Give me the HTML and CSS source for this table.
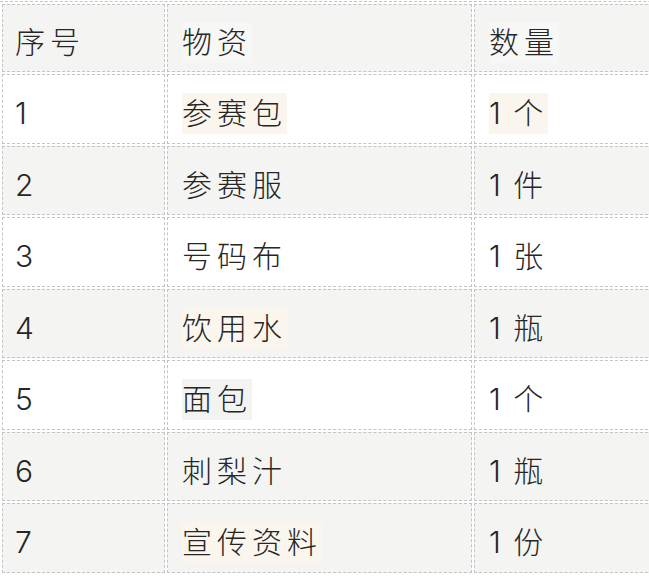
FILE: index.html
```html
<!DOCTYPE html>
<html lang="zh-CN">
<head>
<meta charset="utf-8">
<title>物资清单</title>
<link rel="stylesheet" href="styles.css">
</head>
<body>
<table class="supply">
  <thead>
    <tr class="head">
      <th class="c1"><span class="t">序号</span></th>
      <th class="c2"><span class="t hl-grey">物资</span></th>
      <th class="c3"><span class="t hl-grey">数量</span></th>
    </tr>
  </thead>
  <tbody>
    <tr class="odd">
      <td><span class="t">1</span></td>
      <td><span class="t hl-cream">参赛包</span></td>
      <td><span class="t hl-cream">1 个</span></td>
    </tr>
    <tr class="even">
      <td><span class="t">2</span></td>
      <td><span class="t">参赛服</span></td>
      <td><span class="t">1 件</span></td>
    </tr>
    <tr class="odd">
      <td><span class="t">3</span></td>
      <td><span class="t">号码布</span></td>
      <td><span class="t">1 张</span></td>
    </tr>
    <tr class="even">
      <td><span class="t">4</span></td>
      <td><span class="t hl-cream">饮用水</span></td>
      <td><span class="t">1 瓶</span></td>
    </tr>
    <tr class="odd">
      <td><span class="t">5</span></td>
      <td><span class="t hl-grey">面包</span></td>
      <td><span class="t">1 个</span></td>
    </tr>
    <tr class="even">
      <td><span class="t">6</span></td>
      <td><span class="t">刺梨汁</span></td>
      <td><span class="t">1 瓶</span></td>
    </tr>
    <tr class="even">
      <td><span class="t">7</span></td>
      <td><span class="t hl-cream">宣传资料</span></td>
      <td><span class="t">1 份</span></td>
    </tr>
  </tbody>
</table>
</body>
</html>
```
FILE: styles.css
```css
html, body {
  margin: 0;
  padding: 0;
  background: #ffffff;
  overflow: hidden;
}

body {
  font-family: "Inter", "Noto Sans CJK SC", "Noto Sans", sans-serif;
  color: #262626;
}

.supply {
  border-collapse: separate;
  border-spacing: 2px;
  table-layout: fixed;
  width: 776px;
  margin-top: 1px;
  border-top: 1px dashed #c4c4c4;
}

.supply th,
.supply td {
  box-sizing: border-box;
  border: 1px dashed #c4c4c4;
  padding: 18px 10px 8.5px 14px;
  text-align: left;
  vertical-align: top;
  font-weight: 300;
}

.supply th:first-child,
.supply td:first-child {
  padding-left: 12px;
}

.supply .head th {
  padding-top: 17px;
  padding-bottom: 8px;
  background: #f4f4f2;
}

.c1 { width: 163px; }
.c2 { width: 305px; }
.c3 { width: 300px; }

.odd td { background: #ffffff; }
.even td { background: #f4f4f2; }

.t {
  display: inline-block;
  height: 41px;
  line-height: 41px;
  font-size: 30px;
  letter-spacing: 5px;
  word-spacing: -6px;
  white-space: nowrap;
  vertical-align: top;
}

.hl-cream { background: #faf6ee; }
.hl-grey { background: #f7f7f5; }
.odd .hl-grey { background: #f3f3f2; }
```
